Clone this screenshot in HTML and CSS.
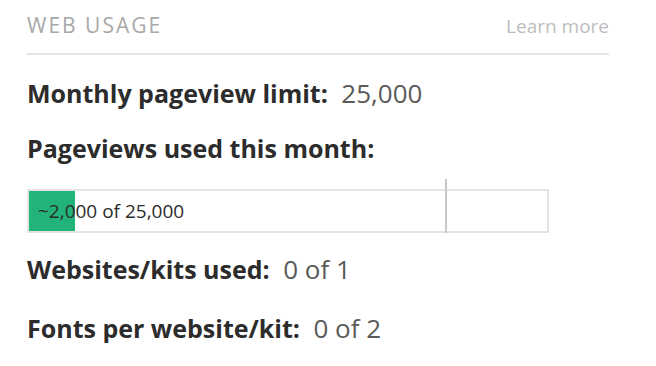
FILE: index.html
```html
<!DOCTYPE html>
<html lang="en">

<head>
    <meta charset="UTF-8">
    <meta name="viewport" content="width=device-width, initial-scale=1.0">
    <title>Web Usage</title>
    <link rel="stylesheet" href="styles.css">
</head>

<body>
    <section class="usage">
        <!-- Header -->
        <div class="usage-header">
            <h2>WEB USAGE</h2>
            <a href="#" class="learn-more">Learn more</a>
        </div>

        <p class="stat stat-limit"><strong>Monthly pageview limit:</strong> <span>25,000</span></p>

        <p class="stat stat-used"><strong>Pageviews used this month:</strong></p>

        <!-- Usage Bar -->
        <div class="meter">
            <div class="meter-fill" style="width: 46px;"></div>
            <div class="meter-mark"></div>
            <span class="meter-label">~2,000 of 25,000</span>
        </div>

        <p class="stat stat-sites"><strong>Websites/kits used:</strong> <span>0 of 1</span></p>

        <p class="stat stat-fonts"><strong>Fonts per website/kit:</strong> <span>0 of 2</span></p>
    </section>
</body>

</html>
```

FILE: styles.css
```css
body {
    font-family: 'Open Sans', sans-serif;
    background-color: #ffffff;
    color: #2c2c2c;
    margin: 0;
    padding: 0;
}

.usage {
    width: 582px;
    padding: 13px 0 0 27px;
}

.usage-header {
    display: flex;
    justify-content: space-between;
    align-items: baseline;
    padding-bottom: 15px;
    border-bottom: 2px solid #e4e4e4;
}

.usage-header h2 {
    margin: 0;
    font-size: 21px;
    line-height: 24px;
    font-weight: normal;
    letter-spacing: 2px;
    color: #a8a8a8;
}

.learn-more {
    font-size: 19px;
    line-height: 24px;
    color: #bdbdbd;
    text-decoration: none;
}

.stat {
    margin: 0;
    font-size: 25px;
    line-height: 30px;
}

.stat strong {
    font-weight: bold;
    color: #2c2c2c;
}

.stat span {
    font-size: 26px;
    color: #5a5a5a;
    margin-left: 7px;
}

.stat-limit {
    margin-top: 23px;
}

.stat-used {
    margin-top: 25px;
}

.stat-sites {
    margin-top: 21px;
}

.stat-fonts {
    margin-top: 29px;
}

.meter {
    position: relative;
    width: 518px;
    height: 40px;
    margin-top: 26px;
    border: 2px solid #e4e4e4;
    display: flex;
    align-items: center;
}

.meter-fill {
    position: absolute;
    left: 0;
    top: 0;
    bottom: 0;
    background-color: #22b37a;
}

.meter-mark {
    position: absolute;
    left: 416px;
    top: -12px;
    bottom: -2px;
    width: 2px;
    background-color: #c8c8c8;
}

.meter-label {
    position: relative;
    margin-left: 9px;
    font-size: 19px;
    color: #2c2c2c;
}
```
